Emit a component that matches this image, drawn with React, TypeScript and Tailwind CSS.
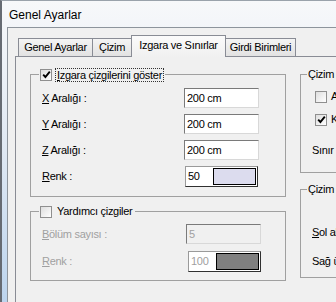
import React from "react";

function Box({ checked = false }: { checked?: boolean }) {
  return (
    <span className="flex h-[12px] w-[12px] shrink-0 items-center justify-center border border-[#8f8f8f] bg-gradient-to-br from-[#dedede] to-white">
      {checked && (
        <svg width="9" height="9" viewBox="0 0 9 9">
          <path d="M1.2 4.6 L3.4 7 L7.8 1.6" fill="none" stroke="#000" strokeWidth="1.9" />
        </svg>
      )}
    </span>
  );
}

function Field({ value, disabled = false }: { value: string; disabled?: boolean }) {
  return (
    <div
      className={`flex h-[20px] w-[75px] items-center border border-t-[#7a7a7a] border-l-[#7a7a7a] border-r-[#d8d8d8] border-b-[#d8d8d8] px-[2px] ${
        disabled ? "bg-[#f0f0f0] text-[#a0a0a0]" : "bg-white text-black"
      }`}
    >
      {value}
    </div>
  );
}

function ColorBox({ value, swatch, disabled = false }: { value: string; swatch: string; disabled?: boolean }) {
  return (
    <div className="flex h-[21px] w-[73px] border border-t-[#9a9a9a] border-l-[#9a9a9a] border-r-[#303030] border-b-[#303030] bg-white p-[1px]">
      <span className={`flex w-[26px] items-center pl-[1px] ${disabled ? "text-[#a0a0a0]" : "text-black"}`}>{value}</span>
      <span className="flex-1 border border-black" style={{ backgroundColor: swatch }} />
    </div>
  );
}

export default function App() {
  return (
    <div className="flex h-[302px] w-[336px] flex-col overflow-hidden border-t border-l-2 border-t-[#9aa2ab] border-l-[#666b73] bg-gradient-to-b from-[#f7f8fa] via-[#dfe8f3] to-[#bcd4ee] font-['Liberation_Sans',Arial,sans-serif] text-[11px] tracking-[-0.3px] text-black">
      {/* Title bar */}
      <div className="h-[26px] shrink-0 pl-[7px] pt-[7px] text-[12px] leading-[14px] tracking-normal">Genel Ayarlar</div>

      {/* Client area */}
      <div className="ml-[5px] flex w-[400px] flex-1 flex-col border-t border-l border-[#8d949c] bg-[#f0f0f0] pl-[7px] pt-[7px]">
        {/* Tabs */}
        <div className="flex h-[21px] items-end pl-[3px]">
          <div className="flex h-[18px] w-[75px] items-center justify-center border-x border-t border-[#898c95] bg-gradient-to-b from-[#f4f4f4] to-[#e2e2e2]">
            Genel Ayarlar
          </div>
          <div className="flex h-[18px] w-[39px] items-center justify-center border-t border-r border-[#898c95] bg-gradient-to-b from-[#f4f4f4] to-[#e2e2e2]">
            Çizim
          </div>
          <div className="relative z-10 -mb-px -ml-px flex h-[22px] w-[95px] items-center justify-center border-x border-t border-[#898c95] bg-gradient-to-b from-[#fbfbfb] to-[#f0f0f0] pb-[2px]">
            Izgara ve Sınırlar
          </div>
          <div className="flex h-[18px] w-[70px] items-center justify-center border-t border-r border-[#898c95] bg-gradient-to-b from-[#f4f4f4] to-[#e2e2e2]">
            Girdi Birimleri
          </div>
        </div>

        {/* Tab page */}
        <div className="flex flex-1 items-start border-t border-l border-[#898c95] bg-[#f0f0f0] pl-[14px] pt-[11px]">
          {/* Left column */}
          <div className="flex flex-col">
            <fieldset className="w-[256px] border border-[#a0a0a0]">
              <legend className="ml-[8px] flex h-[13px] items-center px-[1px]">
                <Box checked />
                <span className="ml-[3px] border border-dotted border-[#333] px-[1px] leading-[12px]">
                  <u>I</u>zgara çizgilerini göster
                </span>
              </legend>
              <div className="flex flex-col gap-[6px] pb-[9px] pl-[11px] pt-[7px]">
                <div className="flex h-[20px] items-center">
                  <span className="w-[142px]"><u>X</u> Aralığı :</span>
                  <Field value="200 cm" />
                </div>
                <div className="flex h-[20px] items-center">
                  <span className="w-[142px]"><u>Y</u> Aralığı :</span>
                  <Field value="200 cm" />
                </div>
                <div className="flex h-[20px] items-center">
                  <span className="w-[142px]"><u>Z</u> Aralığı :</span>
                  <Field value="200 cm" />
                </div>
                <div className="flex h-[21px] items-center">
                  <span className="w-[143px]"><u>R</u>enk :</span>
                  <ColorBox value="50" swatch="#dcdcee" />
                </div>
              </div>
            </fieldset>

            <fieldset className="mt-[8px] w-[256px] border border-[#a0a0a0]">
              <legend className="ml-[8px] flex h-[13px] items-center px-[1px]">
                <Box />
                <span className="ml-[5px] pr-[2px]">Yardımcı çizgiler</span>
              </legend>
              <div className="flex flex-col gap-[7px] pb-[8px] pl-[11px] pt-[6px] text-[#a0a0a0]">
                <div className="flex h-[20px] items-center">
                  <span className="w-[144px]"><u>B</u>ölüm sayısı :</span>
                  <Field value="5" disabled />
                </div>
                <div className="flex h-[21px] items-center">
                  <span className="w-[146px]"><u>R</u>enk :</span>
                  <ColorBox value="100" swatch="#808080" disabled />
                </div>
              </div>
            </fieldset>
          </div>

          {/* Right column */}
          <div className="ml-[14px] flex w-[150px] flex-col">
            <fieldset className="border border-[#a0a0a0]">
              <legend className="ml-[6px] h-[13px] px-[1px] leading-[13px]">Çizim seçenekleri</legend>
              <div className="flex flex-col pb-[15px] pt-[9px]">
                <div className="flex h-[13px] items-center pl-[14px]">
                  <Box />
                  <span className="ml-[4px] whitespace-nowrap">Aks çizgileri</span>
                </div>
                <div className="mt-[10px] flex h-[13px] items-center pl-[14px]">
                  <Box checked />
                  <span className="ml-[4px] whitespace-nowrap">Kolon çizgileri</span>
                </div>
                <div className="mt-[18px] h-[13px] whitespace-nowrap pl-[11px] leading-[13px]">Sınır çizgisi</div>
              </div>
            </fieldset>

            <fieldset className="mt-[10px] border border-[#a0a0a0]">
              <legend className="ml-[6px] h-[13px] px-[1px] leading-[13px]">Çizim alanı</legend>
              <div className="flex flex-col pb-[9px] pl-[11px] pt-[30px]">
                <div className="h-[13px] whitespace-nowrap leading-[13px]"><u>S</u>ol alt köşe</div>
                <div className="mt-[16px] h-[13px] whitespace-nowrap leading-[13px]">Sağ üst köşe</div>
              </div>
            </fieldset>
          </div>
        </div>
      </div>
    </div>
  );
}
